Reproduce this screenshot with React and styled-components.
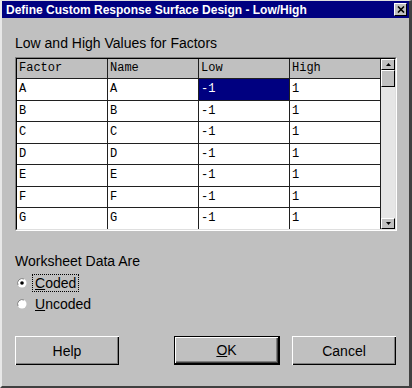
import styled, { createGlobalStyle } from "styled-components";

const Global = createGlobalStyle`
  html, body {
    margin: 0;
    padding: 0;
    background: #c0c0c0;
  }
`;

const Window = styled.div`
  width: 412px;
  height: 388px;
  box-sizing: border-box;
  background: #c0c0c0;
  border-top: 1px solid #dfdfdf;
  border-left: 2px solid #e8e8e8;
  border-right: 3px solid #404040;
  border-bottom: 2px solid #404040;
  font-family: "Liberation Sans", Arial, sans-serif;
  color: #000;
  display: flex;
  flex-direction: column;
`;

const TitleBar = styled.div`
  height: 17px;
  background: #000080;
  display: flex;
  align-items: center;
  justify-content: space-between;
  padding: 0 2px 0 4px;
`;

const Title = styled.span`
  color: #fff;
  font-weight: bold;
  font-size: 12px;
`;

const CloseBox = styled.div`
  width: 11px;
  height: 11px;
  background: #c0c0c0;
  border-top: 1px solid #fff;
  border-left: 1px solid #fff;
  border-right: 1px solid #000;
  border-bottom: 1px solid #000;
  display: flex;
  align-items: center;
  justify-content: center;
`;

const Body = styled.div`
  padding: 0 12px 0 13px;
  display: flex;
  flex-direction: column;
`;

const Heading = styled.div`
  font-size: 14px;
  line-height: 16px;
  margin-top: 17px;
`;

const Frame = styled.div`
  margin-top: 6px;
  height: 174px;
  box-sizing: border-box;
  border-top: 1px solid #808080;
  border-left: 1px solid #808080;
  border-right: 1px solid #fff;
  border-bottom: 1px solid #fff;
  display: flex;
`;

const Inner = styled.div`
  flex: 1;
  display: flex;
  border-top: 1px solid #000;
  border-left: 1px solid #000;
  border-right: 1px solid #dfdfdf;
  border-bottom: 1px solid #dfdfdf;
  overflow: hidden;
`;

const Grid = styled.div`
  width: 364px;
  display: grid;
  grid-template-columns: 91px 91px 91px 91px;
  grid-auto-rows: 21.5px;
  grid-template-rows: 20px;
  font-family: "Liberation Mono", "Courier New", monospace;
  font-size: 12px;
`;

const Cell = styled.div`
  box-sizing: border-box;
  background: ${(p) => (p.$head ? "#c0c0c0" : p.$selected ? "#000080" : "#fff")};
  color: ${(p) => (p.$selected ? "#fff" : "#000")};
  border-right: 1px solid #202020;
  border-bottom: 1px solid #202020;
  padding: ${(p) => (p.$head ? "2px" : "3px")} 0 0 2px;
  line-height: 15px;
  white-space: nowrap;
`;

const ScrollBar = styled.div`
  width: 14px;
  display: flex;
  flex-direction: column;
  background: #e6e6e6;
`;

const ScrollBtn = styled.div`
  height: ${(p) => p.$h || 11}px;
  box-sizing: border-box;
  background: #c0c0c0;
  border-top: 1px solid #fff;
  border-left: 1px solid #fff;
  border-right: 1px solid #000;
  border-bottom: 1px solid #000;
  display: flex;
  align-items: center;
  justify-content: center;
`;

const Track = styled.div`
  flex: 1;
`;

const SectionLabel = styled.div`
  font-size: 14px;
  line-height: 16px;
  margin-top: 22px;
`;

const RadioGroup = styled.div`
  margin-top: 3px;
  display: flex;
  flex-direction: column;
`;

const RadioRow = styled.label`
  height: 21px;
  display: flex;
  align-items: center;
  gap: 5px;
  padding-left: 2px;
  font-size: 14px;
`;

const RadioText = styled.span`
  padding: 0 2px;
  line-height: 16px;
  border: 1px ${(p) => (p.$focus ? "dotted #000" : "solid transparent")};
`;

const Buttons = styled.div`
  margin-top: 22px;
  display: flex;
  justify-content: space-between;
  width: 382px;
`;

const ButtonGroup = styled.div`
  display: flex;
  gap: 12px;
`;

const Button = styled.button`
  width: ${(p) => (p.$default ? 106 : 105)}px;
  height: 29px;
  box-sizing: border-box;
  background: #c0c0c0;
  font-family: "Liberation Sans", Arial, sans-serif;
  font-size: 14px;
  color: #000;
  padding: 0;
  box-shadow: ${(p) =>
    p.$default
      ? "inset 1px 1px 0 #fff, inset -1px -1px 0 #404040, inset -2px -2px 0 #808080"
      : "inset 1px 1px 0 #fff, inset -1px -1px 0 #000, inset -2px -2px 0 #808080"};
  border-width: ${(p) => (p.$default ? "1px 2px 2px 1px" : "0 1px 0 0")};
  border-color: ${(p) => (p.$default ? "#000" : "transparent")};
  border-style: solid;
`;

const Radio = ({ checked }) => (
  <svg width="10" height="10" viewBox="0 0 10 10">
    <circle cx="5" cy="5" r="4.5" fill="#fff" />
    <path d="M1 7 A4.5 4.5 0 0 1 7 1" stroke="#808080" strokeWidth="1" fill="none" />
    {checked && <circle cx="5" cy="5" r="1.8" fill="#000" />}
  </svg>
);

const rows = ["A", "B", "C", "D", "E", "F", "G"];

export default function App() {
  return (
    <>
      <Global />
      <Window>
        <TitleBar>
          <Title>Define Custom Response Surface Design - Low/High</Title>
          <CloseBox>
            <svg width="8" height="7" viewBox="0 0 8 7">
              <path d="M1 0.5 L7 6.5 M7 0.5 L1 6.5" stroke="#000" strokeWidth="1.6" />
            </svg>
          </CloseBox>
        </TitleBar>
        <Body>
          <Heading>Low and High Values for Factors</Heading>
          <Frame>
            <Inner>
              <Grid>
                <Cell $head>Factor</Cell>
                <Cell $head>Name</Cell>
                <Cell $head>Low</Cell>
                <Cell $head>High</Cell>
                {rows.map((r, i) => [
                  <Cell key={r + "f"}>{r}</Cell>,
                  <Cell key={r + "n"}>{r}</Cell>,
                  <Cell key={r + "l"} $selected={i === 0}>-1</Cell>,
                  <Cell key={r + "h"}>1</Cell>,
                ])}
              </Grid>
              <ScrollBar>
                <ScrollBtn>
                  <svg width="5" height="3" viewBox="0 0 5 3"><path d="M2.5 0 L5 3 L0 3 Z" fill="#000" /></svg>
                </ScrollBtn>
                <ScrollBtn $h={17} />
                <Track />
                <ScrollBtn>
                  <svg width="5" height="3" viewBox="0 0 5 3"><path d="M0 0 L5 0 L2.5 3 Z" fill="#000" /></svg>
                </ScrollBtn>
              </ScrollBar>
            </Inner>
          </Frame>
          <SectionLabel>Worksheet Data Are</SectionLabel>
          <RadioGroup>
            <RadioRow>
              <Radio checked />
              <RadioText $focus><u>C</u>oded</RadioText>
            </RadioRow>
            <RadioRow>
              <Radio />
              <RadioText><u>U</u>ncoded</RadioText>
            </RadioRow>
          </RadioGroup>
          <Buttons>
            <Button>Help</Button>
            <ButtonGroup>
              <Button $default><u>O</u>K</Button>
              <Button>Cancel</Button>
            </ButtonGroup>
          </Buttons>
        </Body>
      </Window>
    </>
  );
}
